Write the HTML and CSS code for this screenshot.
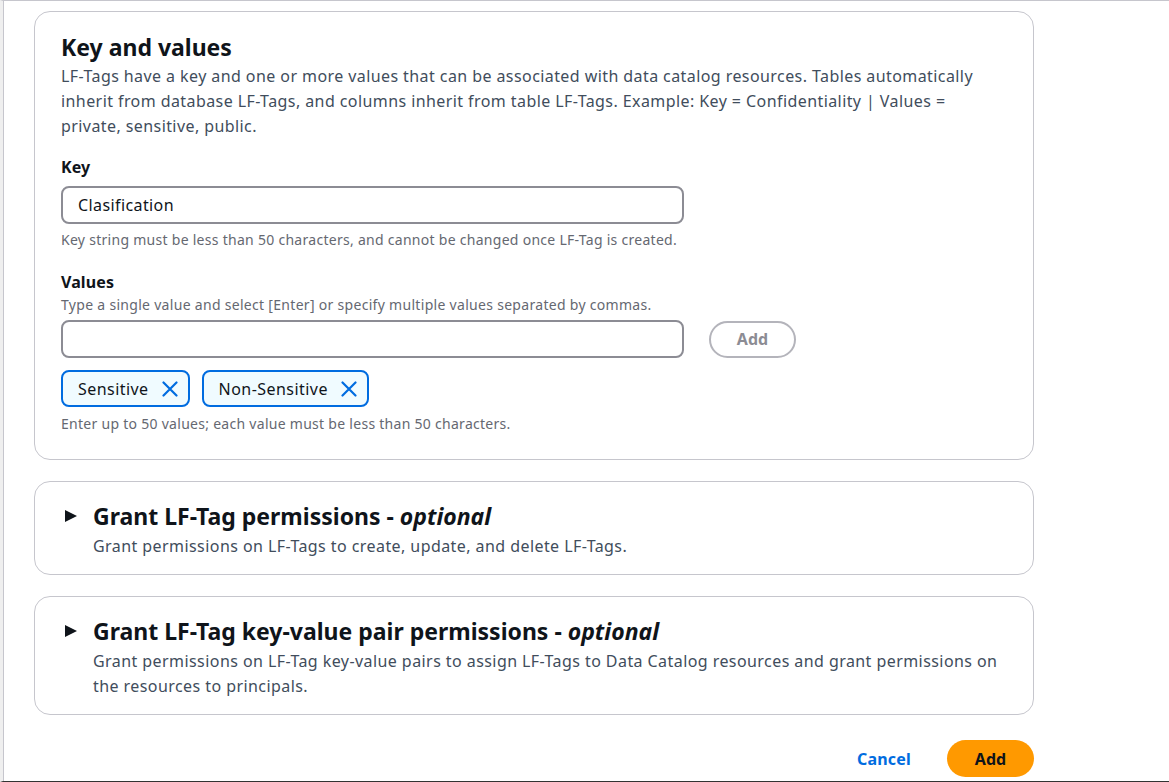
FILE: index.html
```html
<!DOCTYPE html>
<html>
<head>
<meta charset="utf-8">
<link rel="stylesheet" href="styles.css">
</head>
<body>
<div class="frame">
  <main class="page">
    <section class="card">
      <h2 class="card-title">Key and values</h2>
      <p class="card-desc">LF-Tags have a key and one or more values that can be associated with data catalog resources. Tables automatically inherit from database LF-Tags, and columns inherit from table LF-Tags. Example: Key = Confidentiality | Values = private, sensitive, public.</p>

      <div class="field">
        <label class="field-label">Key</label>
        <div class="input">Clasification</div>
        <div class="hint">Key string must be less than 50 characters, and cannot be changed once LF-Tag is created.</div>
      </div>

      <div class="field values">
        <label class="field-label">Values</label>
        <div class="field-desc">Type a single value and select [Enter] or specify multiple values separated by commas.</div>
        <div class="input-row">
          <div class="input"></div>
          <button class="btn-disabled">Add</button>
        </div>
        <div class="tokens">
          <span class="token">Sensitive
            <svg class="x" viewBox="0 0 16 16" width="16" height="16"><path d="M1.5 1.5 L14.5 14.5 M14.5 1.5 L1.5 14.5" stroke="#006ce0" stroke-width="2.2" fill="none" stroke-linecap="round"/></svg>
          </span>
          <span class="token">Non-Sensitive
            <svg class="x" viewBox="0 0 16 16" width="16" height="16"><path d="M1.5 1.5 L14.5 14.5 M14.5 1.5 L1.5 14.5" stroke="#006ce0" stroke-width="2.2" fill="none" stroke-linecap="round"/></svg>
          </span>
        </div>
        <div class="hint hint-last">Enter up to 50 values; each value must be less than 50 characters.</div>
      </div>
    </section>

    <section class="card expand">
      <div class="exp-head">
        <svg class="caret" viewBox="0 0 12 12" width="12" height="12"><path d="M0 0 L12 6 L0 12 Z" fill="#0f141a"/></svg>
        <h2 class="card-title">Grant LF-Tag permissions - <i>optional</i></h2>
      </div>
      <p class="exp-desc">Grant permissions on LF-Tags to create, update, and delete LF-Tags.</p>
    </section>

    <section class="card expand">
      <div class="exp-head">
        <svg class="caret" viewBox="0 0 12 12" width="12" height="12"><path d="M0 0 L12 6 L0 12 Z" fill="#0f141a"/></svg>
        <h2 class="card-title">Grant LF-Tag key-value pair permissions - <i>optional</i></h2>
      </div>
      <p class="exp-desc">Grant permissions on LF-Tag key-value pairs to assign LF-Tags to Data Catalog resources and grant permissions on the resources to principals.</p>
    </section>

    <div class="actions">
      <button class="btn-link">Cancel</button>
      <button class="btn-primary">Add</button>
    </div>
  </main>
</div>
</body>
</html>
```
FILE: styles.css
```css
* { box-sizing: border-box; }
html, body { margin: 0; padding: 0; }
body {
  font-family: "Noto Sans", "Open Sans", sans-serif;
  color: #0f141a;
  background: #fff;
  width: 1169px;
  height: 782px;
  overflow: hidden;
}
.frame {
  height: 782px;
  border-top: 1px solid #c6c6cd;
  border-bottom: 1px solid #333;
  border-left: 3px solid #efefef;
  display: flex;
}
.page {
  border-left: 1px solid #c6c6cd;
  padding: 10px 0 0 30px;
  width: 1031px;
  display: flex;
  flex-direction: column;
  gap: 21px;
}
.card {
  width: 1000px;
  border: 1px solid #c6c6cd;
  border-radius: 16px;
  padding: 20px 26px 0 26px;
}
.card:first-child { height: 449px; flex: none; }
.card-title {
  margin: 0;
  font-size: 23px;
  line-height: 30px;
  font-weight: 700;
  letter-spacing: 0;
}
.card-desc {
  margin: 2px 0 0 0;
  font-size: 16px;
  line-height: 25px;
  color: #414d5c;
  letter-spacing: 0.42px;
}
.field { margin-top: 17px; }
.field-label {
  display: block;
  font-weight: 700;
  font-size: 16px;
  line-height: 22px;
  margin-bottom: 8px;
  letter-spacing: 0.1px;
}
.field.values { margin-top: 21px; }
.field.values .field-label { margin-bottom: 2px; }
.field-desc {
  font-size: 14px;
  line-height: 20px;
  color: #656871;
  margin-bottom: 5px;
  letter-spacing: 0.3px;
}
.input {
  width: 623px;
  height: 38px;
  border: 2px solid #8c8c94;
  border-radius: 8px;
  padding: 0 15px;
  font-size: 16px;
  line-height: 34px;
  letter-spacing: 0.4px;
}
.hint {
  font-size: 14px;
  line-height: 20px;
  color: #656871;
  margin-top: 6px;
  letter-spacing: 0.28px;
}
.hint-last { margin-top: 7px; }
.input-row {
  display: flex;
  align-items: center;
  gap: 25px;
}
button { font-family: inherit; }
.btn-disabled {
  width: 87px;
  height: 37px;
  border: 2px solid #b4b4bb;
  border-radius: 20px;
  background: #fff;
  color: #8c8c94;
  font-weight: 700;
  font-size: 16px;
  padding: 0;
}
.tokens {
  display: flex;
  gap: 12px;
  margin-top: 12px;
}
.token {
  display: inline-flex;
  align-items: center;
  gap: 13px;
  height: 37px;
  border: 2px solid #006ce0;
  border-radius: 8px;
  background: #f0fbff;
  padding: 0 10px 0 15px;
  font-size: 16px;
  letter-spacing: 0.45px;
}
.token .x { width: 16px; height: 16px; }
.expand { padding: 19px 26px 15px 26px; }
.exp-head {
  display: flex;
  align-items: center;
  gap: 16px;
  margin-left: 4px;
}
.caret { flex: none; }
.card-title i { font-weight: 700; }
.exp-desc {
  margin: 3px 0 0 32px;
  font-size: 16px;
  line-height: 25px;
  color: #414d5c;
  letter-spacing: 0.43px;
}
.actions {
  display: flex;
  justify-content: flex-end;
  align-items: center;
  gap: 36px;
  width: 1000px;
  margin-top: 4px;
}
.btn-link {
  border: none;
  background: none;
  color: #006ce0;
  font-weight: 700;
  font-size: 16px;
  padding: 0;
  letter-spacing: 0.2px;
}
.btn-primary {
  width: 87px;
  height: 37px;
  border: none;
  border-radius: 20px;
  background: #ff9900;
  color: #0f141a;
  font-weight: 700;
  font-size: 16px;
  padding: 0;
}
```
